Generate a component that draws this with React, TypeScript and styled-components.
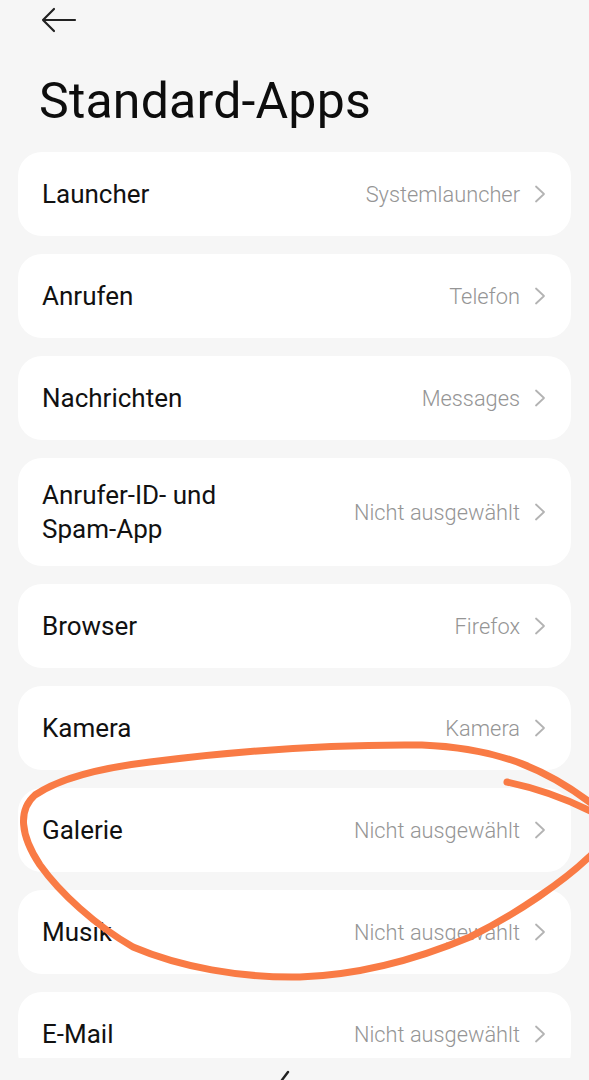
import * as React from "react";
import styled, { createGlobalStyle } from "styled-components";

const GlobalStyle = createGlobalStyle`
  html, body {
    margin: 0;
    padding: 0;
    background: #f6f6f6;
  }
  body {
    font-family: Roboto, "Noto Sans", "Liberation Sans", sans-serif;
    -webkit-font-smoothing: antialiased;
  }
`

const Page = styled.div`
  position: relative;
  width: 589px;
  height: 1080px;
  overflow: hidden;
  background: #f6f6f6;
`

const TopBar = styled.div`
  height: 40px;
  padding-left: 41px;
  display: flex;
  align-items: flex-start;
  padding-top: 7px;
  box-sizing: border-box;
`

const Title = styled.h1`
  margin: 31px 0 21px 39px;
  font-size: 50px;
  line-height: 60px;
  font-weight: 400;
  color: #0d0d0d;
  letter-spacing: 0.2px;
`

const List = styled.div`
  display: flex;
  flex-direction: column;
  gap: 18px;
  padding: 0 18px;
`

const Card = styled.div`
  background: #fff;
  border-radius: 24px;
  min-height: 84px;
  padding: 20px 24px;
  box-sizing: border-box;
  display: flex;
  align-items: center;
  gap: 16px;
`

const Label = styled.div`
  flex: 1;
  min-width: 0;
  max-width: 230px;
  font-size: 26px;
  line-height: 34px;
  color: #111;
  white-space: normal;
`

const Value = styled.div`
  margin-left: auto;
  display: flex;
  align-items: center;
  gap: 13px;
  font-size: 21.8px;
  font-weight: 300;
  color: #959595;
  white-space: nowrap;
`

const BottomBar = styled.div`
  position: absolute;
  left: 0;
  right: 0;
  bottom: 0;
  height: 22px;
  background: #f6f6f6;
`

const Overlay = styled.svg`
  position: absolute;
  left: 0;
  top: 0;
  pointer-events: none;
`

const rows = [
  { label: "Launcher", value: "Systemlauncher" },
  { label: "Anrufen", value: "Telefon" },
  { label: "Nachrichten", value: "Messages" },
  { label: "Anrufer-ID- und Spam-App", value: "Nicht ausgewählt" },
  { label: "Browser", value: "Firefox" },
  { label: "Kamera", value: "Kamera" },
  { label: "Galerie", value: "Nicht ausgewählt" },
  { label: "Musik", value: "Nicht ausgewählt" },
  { label: "E-Mail", value: "Nicht ausgewählt" },
]

function Chevron() {
  return (
    <svg width="14" height="18" viewBox="0 0 14 18">
      <path d="M3 1.5 L11 9 L3 16.5" fill="none" stroke="#b3b3b3" strokeWidth="1.8" strokeLinecap="round" strokeLinejoin="round" />
    </svg>
  )
}

function BackArrow() {
  return (
    <svg width="36" height="26" viewBox="0 0 36 26">
      <path d="M2 13 H34 M13 2 L2 13 L13 24" fill="none" stroke="#222" strokeWidth="2.2" strokeLinecap="round" strokeLinejoin="round" />
    </svg>
  )
}

function Row({ label, value }: { label: string, value: string }) {
  return (
    <Card>
      <Label>{label}</Label>
      <Value>
        {value}
        <Chevron />
      </Value>
    </Card>
  )
}

export default function App() {
  return (
    <>
      <GlobalStyle />
      <Page>
        <TopBar>
          <BackArrow />
        </TopBar>
        <Title>Standard-Apps</Title>
        <List>
          {rows.map(r => <Row key={r.label} label={r.label} value={r.value} />)}
        </List>
        <BottomBar>
          <svg width="589" height="22" viewBox="0 0 589 22">
            <path d="M288 14 L282 22" stroke="#222" strokeWidth="2.4" strokeLinecap="round" />
          </svg>
        </BottomBar>
        {/* hand-drawn annotation round "Galerie" */}
        <Overlay width="589" height="1080" viewBox="0 0 589 1080">
          <path
            d="M507 782 Q555 792 598 815 Q610 838 589 857 C565 880 520 912 470 937 C420 958 360 975 300 977 C240 978 180 967 133 947 C95 925 60 893 40 865 C20 835 18 810 35 795 C60 778 100 768 150 762 C230 752 330 744 422 745 C500 748 550 770 600 810"
            fill="none"
            stroke="#f97b45"
            strokeWidth="7"
            strokeLinecap="round"
            strokeLinejoin="round"
          />
        </Overlay>
      </Page>
    </>
  )
}
